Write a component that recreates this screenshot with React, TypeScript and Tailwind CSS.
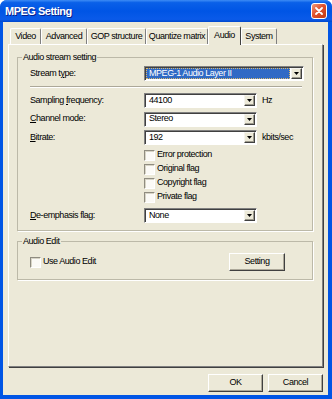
import type { ReactNode } from "react"

function Arrow() {
  return (
    <svg width="5" height="3" viewBox="0 0 5 3">
      <polygon points="0,0 5,0 2.5,3" fill="#000" />
    </svg>
  )
}

function Combo({ value, width, focused }: { value: string; width: string; focused?: boolean }) {
  return (
    <div
      className={`flex h-[15px] shrink-0 border border-t-[#808080] border-l-[#808080] border-b-white border-r-white bg-white py-[1px] pr-[1px] pl-[1px] shadow-[inset_1px_1px_0_#404040] ${width}`}
    >
      {focused ? (
        <div className="mr-[1px] flex flex-1 items-center border border-dotted border-[#d9b86a] bg-[#316ac5] pl-[2px] text-white">
          {value}
        </div>
      ) : (
        <div className="flex flex-1 items-center pl-[3px]">{value}</div>
      )}
      <div className="flex w-[11px] shrink-0 items-center justify-center border border-t-[#f4f3ee] border-l-[#f4f3ee] border-b-[#404040] border-r-[#404040] bg-[#ece9d8] shadow-[inset_-1px_-1px_0_#9d9a8c]">
        <Arrow />
      </div>
    </div>
  )
}

function Check({ label }: { label: string }) {
  return (
    <div className="flex h-[14px] items-center gap-[2px]">
      <span className="h-[11px] w-[11px] shrink-0 border border-t-[#8f8c80] border-l-[#8f8c80] border-b-white border-r-white bg-[#fbfaf6] shadow-[inset_1px_1px_0_#d8d5c6]" />
      <span>{label}</span>
    </div>
  )
}

function Btn({ label, width }: { label: string; width: string }) {
  return (
    <button
      className={`flex h-[18px] items-center justify-center border border-t-white border-l-white border-b-[#404040] border-r-[#404040] bg-[#ece9d8] shadow-[inset_-1px_-1px_0_#aca899] ${width}`}
    >
      {label}
    </button>
  )
}

function Row({ label, children }: { label: ReactNode; children: ReactNode }) {
  return (
    <div className="flex h-[15px] items-center">
      <div className="w-[114px] shrink-0">{label}</div>
      {children}
    </div>
  )
}

function Key({ k }: { k: string }) {
  return <span className="underline">{k}</span>
}

export default function App() {
  const tabs = [
    { label: "Video", w: "w-[31px]" },
    { label: "Advanced", w: "w-[46px]" },
    { label: "GOP structure", w: "w-[59px]" },
    { label: "Quantize matrix", w: "w-[62px]" },
    { label: "Audio", w: "w-[33px]", active: true },
    { label: "System", w: "w-[36px]" },
  ]

  const flags = ["Error protection", "Original flag", "Copyright flag", "Private flag"]

  return (
    <div className="h-[399px] w-[332px] bg-white font-['Liberation_Sans',Arial,sans-serif] text-[9px] tracking-[-0.45px] text-black">
      <div className="flex h-full flex-col overflow-hidden rounded-t-[7px] bg-[#0055e5]">
        {/* title bar */}
        <div className="flex h-[22px] shrink-0 items-center justify-between bg-[linear-gradient(180deg,#3d8cf5_0%,#0a60e8_12%,#0055e5_50%,#0a5ae9_88%,#0047cc_100%)] pl-[5px] pr-[5px]">
          <span className="text-[11px] font-bold tracking-[-0.5px] text-white [text-shadow:1px_1px_0_#0a1f8a]">
            MPEG Setting
          </span>
          <div className="flex h-[16px] w-[16px] items-center justify-center rounded-[3px] border border-white bg-[linear-gradient(135deg,#f09a7c_0%,#e0532f_45%,#c13a12_100%)]">
            <svg width="8" height="8" viewBox="0 0 8 8">
              <path d="M1 1 L7 7 M7 1 L1 7" stroke="#fff" strokeWidth="1.8" strokeLinecap="round" />
            </svg>
          </div>
        </div>

        {/* client area */}
        <div className="mb-[4px] ml-[3px] mr-[4px] flex flex-1 flex-col bg-[#ece9d8] pt-[4px]">
          <div className="ml-[7px] flex h-[18px] items-end">
            {tabs.map((t) =>
              t.active ? (
                <div
                  key={t.label}
                  className={`relative z-10 -mb-[1px] flex h-[19px] items-start justify-center rounded-t-[2px] border-l border-t border-r border-l-white border-t-white border-r-[#404040] bg-[#ece9d8] pt-[2px] ${t.w}`}
                >
                  {t.label}
                </div>
              ) : (
                <div
                  key={t.label}
                  className={`flex h-[16px] items-center justify-center rounded-t-[2px] border-l border-t border-r border-l-white border-t-white border-r-[#808080] ${t.w}`}
                >
                  {t.label}
                </div>
              ),
            )}
          </div>

          {/* tab page */}
          <div className="ml-[5px] flex h-[323px] w-[315px] flex-col border border-t-white border-l-white border-b-[#808080] border-r-[#808080] shadow-[1px_1px_0_#404040]">
            <fieldset className="ml-[8px] mt-[7px] w-[296px] border border-[#bcb9a8] shadow-[1px_1px_0_#fff]">
              <legend className="ml-[4px] bg-[#ece9d8] px-[1px] leading-[11px]">Audio stream setting</legend>
              <div className="flex flex-col pb-[7px] pl-[12px] pt-[3px]">
                <Row label={<>Stream t<Key k="y" />pe:</>}>
                  <Combo value="MPEG-1 Audio Layer II" width="w-[160px]" focused />
                </Row>
                <div className="mb-[5px] mt-[5px] mr-[10px] border-t border-b border-t-[#aca899] border-b-white" />
                <div className="flex flex-col gap-[3.5px]">
                  <Row label={<>Sampling <Key k="f" />requency:</>}>
                    <Combo value="44100" width="w-[113px]" />
                    <span className="ml-[5px]">Hz</span>
                  </Row>
                  <Row label={<><Key k="C" />hannel mode:</>}>
                    <Combo value="Stereo" width="w-[113px]" />
                  </Row>
                  <Row label={<><Key k="B" />itrate:</>}>
                    <Combo value="192" width="w-[113px]" />
                    <span className="ml-[5px]">kbits/sec</span>
                  </Row>
                </div>
                <div className="ml-[114px] mt-[3px] flex flex-col">
                  {flags.map((f) => (
                    <Check key={f} label={f} />
                  ))}
                </div>
                <div className="mt-[4px]">
                  <Row label={<><Key k="D" />e-emphasis flag:</>}>
                    <Combo value="None" width="w-[113px]" />
                  </Row>
                </div>
              </div>
            </fieldset>

            <fieldset className="ml-[8px] mt-[5px] w-[296px] border border-[#bcb9a8] shadow-[1px_1px_0_#fff]">
              <legend className="ml-[4px] bg-[#ece9d8] px-[1px] leading-[11px]">Audio Edit</legend>
              <div className="flex items-center justify-between pb-[8px] pl-[12px] pr-[27px] pt-[6px]">
                <Check label="Use Audio Edit" />
                <Btn label="Setting" width="w-[56px]" />
              </div>
            </fieldset>
          </div>

          <div className="mt-[7px] flex justify-end gap-[5px] pr-[5px]">
            <Btn label="OK" width="w-[55px]" />
            <Btn label="Cancel" width="w-[55px]" />
          </div>
        </div>
      </div>
    </div>
  )
}
